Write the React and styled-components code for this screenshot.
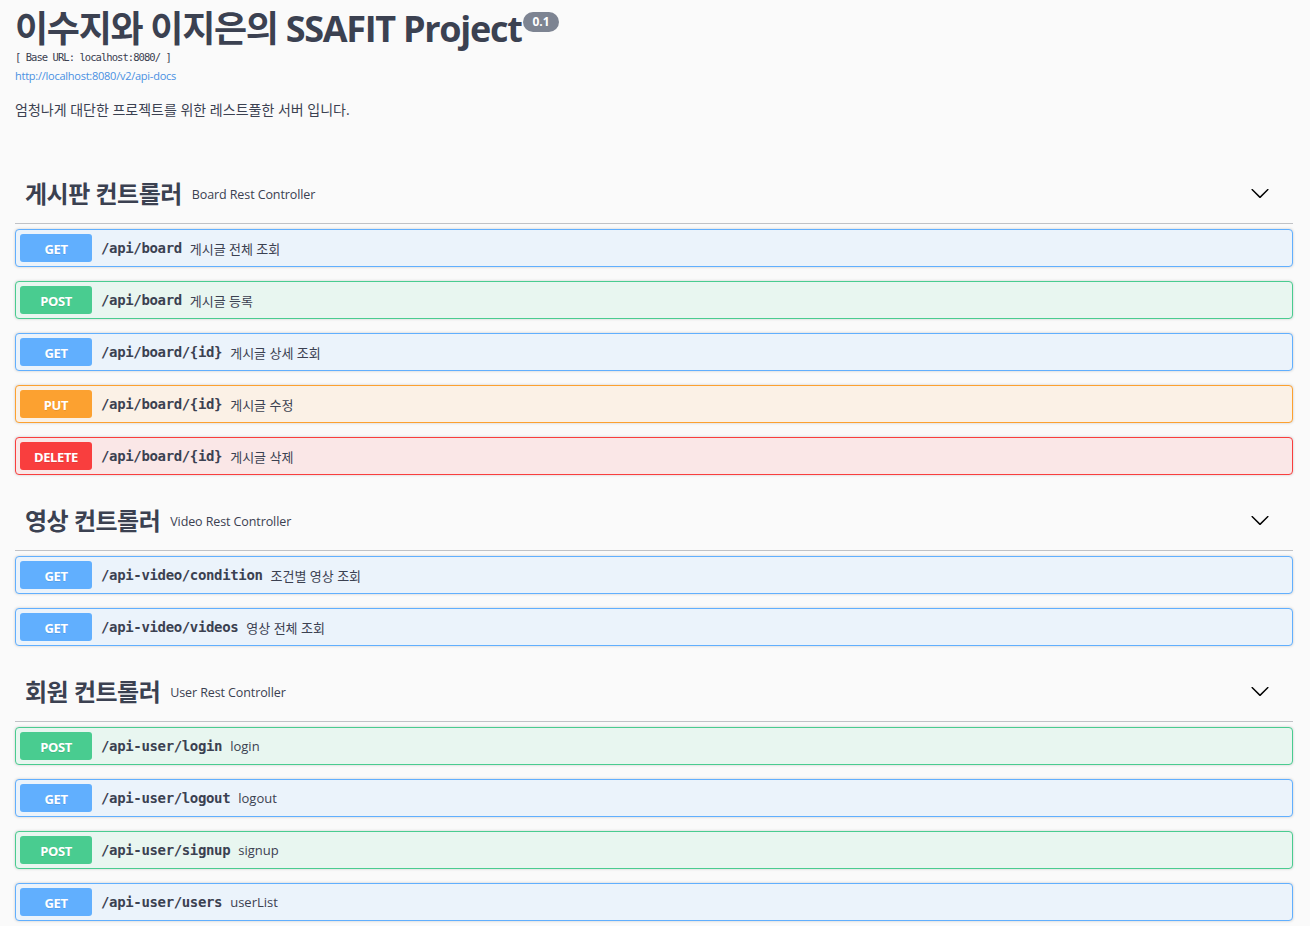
import React from "react";
import styled, { createGlobalStyle } from "styled-components";

const GlobalStyle = createGlobalStyle`
  html, body { margin: 0; padding: 0; background: #fafafa; }
  body { font-family: "Open Sans", "Noto Sans CJK KR", sans-serif; color: #3b4151; }
`;

const METHOD = {
  GET: { main: "#61affe", bg: "#ebf3fb" },
  POST: { main: "#49cc90", bg: "#e8f6f0" },
  PUT: { main: "#fca130", bg: "#fbf1e6" },
  DELETE: { main: "#f93e3e", bg: "#fae7e7" },
};

const Wrapper = styled.div`
  padding: 7px 17px 0 15px;
`;

const Info = styled.div`
  display: flex;
  flex-direction: column;
  margin-bottom: 42px;
`;

const Title = styled.h2`
  margin: 0;
  font-family: "Open Sans", "Noto Sans CJK KR", sans-serif;
  font-size: 36px;
  line-height: 44px;
  font-weight: 700;
  letter-spacing: -1.3px;
  color: #3b4151;
  display: flex;
  align-items: flex-start;
`;

const Version = styled.span`
  display: inline-flex;
  align-items: center;
  justify-content: center;
  height: 20px;
  padding: 0 9px;
  margin: 5px 0 0 2px;
  border-radius: 10px;
  background: #7d8492;
  color: #fff;
  font-family: "Open Sans", sans-serif;
  font-size: 12px;
  font-weight: 700;
  letter-spacing: 0;
  line-height: 1;
`;

const BaseUrl = styled.div`
  font-family: "DejaVu Sans Mono", monospace;
  font-size: 10.5px;
  line-height: 13px;
  letter-spacing: -0.95px;
  color: #3b4151;
  white-space: pre;
`;

const Link = styled.a`
  margin-top: 4px;
  font-family: "Open Sans", sans-serif;
  font-size: 11px;
  line-height: 16px;
  color: #4990e2;
  text-decoration: none;
  letter-spacing: -0.25px;
`;

const Description = styled.p`
  margin: 16px 0 0;
  font-family: "Open Sans", "Noto Sans CJK KR", sans-serif;
  font-size: 14px;
  line-height: 20px;
  letter-spacing: 0;
  color: #3b4151;
`;

const TagSection = styled.section`
  display: flex;
  flex-direction: column;
`;

const TagHeader = styled.h3`
  margin: 0 0 5px;
  height: 62px;
  box-sizing: border-box;
  padding: 10px 23px 10px 10px;
  display: flex;
  align-items: center;
  border-bottom: 1px solid rgba(59, 65, 81, 0.3);
  font-family: "Open Sans", "Noto Sans CJK KR", sans-serif;
  font-weight: 700;
  color: #3b4151;
`;

const TagName = styled.span`
  font-size: 24px;
  letter-spacing: -0.5px;
`;

const TagSmall = styled.small`
  flex: 1;
  padding: 0 10px;
  font-size: 12.5px;
  font-weight: 400;
  letter-spacing: -0.1px;
  margin-top: 3px;
`;

const Chevron = styled.svg`
  width: 20px;
  height: 20px;
  fill: #000;
`;

const Opblock = styled.div`
  height: 38px;
  box-sizing: border-box;
  margin-bottom: 14px;
  padding: 0 4px;
  display: flex;
  align-items: center;
  border: 1px solid ${(p) => METHOD[p.$method].main};
  background: ${(p) => METHOD[p.$method].bg};
  border-radius: 4px;
  box-shadow: 0 0 3px rgba(0, 0, 0, 0.19);
`;

const MethodBadge = styled.span`
  width: 72px;
  height: 28px;
  display: flex;
  align-items: center;
  justify-content: center;
  border-radius: 3px;
  background: ${(p) => METHOD[p.$method].main};
  color: #fff;
  font-family: "Open Sans", sans-serif;
  font-size: 13px;
  font-weight: 700;
  letter-spacing: -0.4px;
  text-shadow: 0 1px 0 rgba(0, 0, 0, 0.1);
  padding-top: 2px;
  box-sizing: border-box;
`;

const Path = styled.span`
  padding: 0 8px 0 9px;
  font-family: "DejaVu Sans Mono", monospace;
  font-size: 14px;
  font-weight: 700;
  letter-spacing: -0.35px;
  color: #3b4151;
`;

const Summary = styled.span`
  font-family: "Open Sans", "Noto Sans CJK KR", sans-serif;
  font-size: 13px;
  letter-spacing: 0;
  color: #3b4151;
`;

const tags = [
  {
    name: "게시판 컨트롤러",
    small: "Board Rest Controller",
    ops: [
      ["GET", "/api/board", "게시글 전체 조회"],
      ["POST", "/api/board", "게시글 등록"],
      ["GET", "/api/board/{id}", "게시글 상세 조회"],
      ["PUT", "/api/board/{id}", "게시글 수정"],
      ["DELETE", "/api/board/{id}", "게시글 삭제"],
    ],
  },
  {
    name: "영상 컨트롤러",
    small: "Video Rest Controller",
    ops: [
      ["GET", "/api-video/condition", "조건별 영상 조회"],
      ["GET", "/api-video/videos", "영상 전체 조회"],
    ],
  },
  {
    name: "회원 컨트롤러",
    small: "User Rest Controller",
    ops: [
      ["POST", "/api-user/login", "login"],
      ["GET", "/api-user/logout", "logout"],
      ["POST", "/api-user/signup", "signup"],
      ["GET", "/api-user/users", "userList"],
    ],
  },
];

const ArrowIcon = () => (
  <Chevron viewBox="0 0 20 20">
    <path d="M17.418 6.109c.272-.268.709-.268.979 0s.271.701 0 .969l-7.908 7.83c-.27.268-.707.268-.979 0l-7.908-7.83c-.27-.268-.27-.701 0-.969.271-.268.709-.268.979 0L10 13.25l7.418-7.141z" />
  </Chevron>
);

export default function App() {
  return (
    <>
      <GlobalStyle />
      <Wrapper>
        <Info>
          <Title>
            이수지와 이지은의 SSAFIT Project
            <Version>0.1</Version>
          </Title>
          <BaseUrl>[ Base URL: localhost:8080/ ]</BaseUrl>
          <Link href="#">http://localhost:8080/v2/api-docs</Link>
          <Description>엄청나게 대단한 프로젝트를 위한 레스트풀한 서버 입니다.</Description>
        </Info>
        {tags.map((t) => (
          <TagSection key={t.name}>
            <TagHeader>
              <TagName>{t.name}</TagName>
              <TagSmall>{t.small}</TagSmall>
              <ArrowIcon />
            </TagHeader>
            {t.ops.map(([m, p, s], i) => (
              <Opblock key={i} $method={m}>
                <MethodBadge $method={m}>{m}</MethodBadge>
                <Path>{p}</Path>
                <Summary>{s}</Summary>
              </Opblock>
            ))}
          </TagSection>
        ))}
      </Wrapper>
    </>
  );
}
